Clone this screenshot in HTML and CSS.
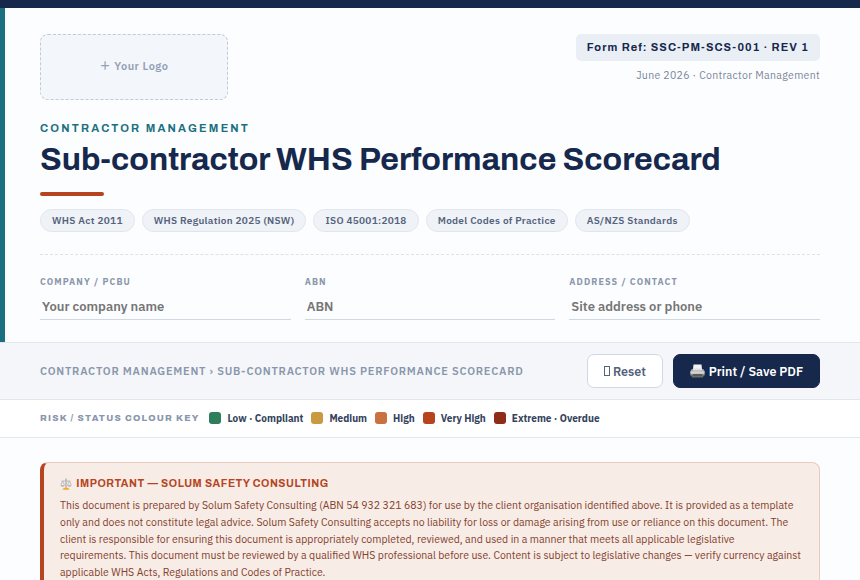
FILE: index.html
```
<!DOCTYPE html>
<html lang="en">
<head>
<meta charset="utf-8">
<title>Sub-contractor WHS Performance Scorecard</title>
<link rel="stylesheet" href="styles.css">
</head>
<body>
<div class="topbar"></div>
<header class="header">
  <div class="header-top">
    <div class="logo">＋ Your Logo</div>
    <div class="meta">
      <div class="ref">Form Ref: SSC-PM-SCS-001 · REV 1</div>
      <div class="date">June 2026 · Contractor Management</div>
    </div>
  </div>
  <div class="eyebrow">CONTRACTOR MANAGEMENT</div>
  <h1 class="title">Sub-contractor WHS Performance Scorecard</h1>
  <div class="rule"></div>
  <div class="chips">
    <span class="chip">WHS Act 2011</span>
    <span class="chip">WHS Regulation 2025 (NSW)</span>
    <span class="chip">ISO 45001:2018</span>
    <span class="chip">Model Codes of Practice</span>
    <span class="chip">AS/NZS Standards</span>
  </div>
  <div class="fields">
    <label class="field"><span class="field-label">COMPANY / PCBU</span><input class="field-input" placeholder="Your company name"></label>
    <label class="field"><span class="field-label">ABN</span><input class="field-input" placeholder="ABN"></label>
    <label class="field"><span class="field-label">ADDRESS / CONTACT</span><input class="field-input" placeholder="Site address or phone"></label>
  </div>
</header>
<div class="toolbar">
  <div class="crumb">CONTRACTOR MANAGEMENT › SUB-CONTRACTOR WHS PERFORMANCE SCORECARD</div>
  <div class="actions">
    <button class="btn"><span class="missing"></span>Reset</button>
    <button class="btn btn-primary"><svg class="printer" viewBox="0 0 15 14"><path d="M3.5 0.5h8l.6 6H2.9z" fill="#f4f4f4"/><path d="M1.8 5h11.4l1.3 2v4.5H.5V7z" fill="#a9a9a9"/><path d="M3 4.5h9v2H3z" fill="#dedede"/><path d="M.5 7.3h14v2.4H.5z" fill="#d2d2d2"/><path d="M1 10.5h13l-1 3H2z" fill="#6c6c68"/><path d="M3 10.3h9v1.2H3z" fill="#444"/></svg>Print / Save PDF</button>
  </div>
</div>
<div class="legend">
  <span class="legend-label">RISK / STATUS COLOUR KEY</span>
  <span class="key"><i class="swatch low"></i>Low · Compliant</span>
  <span class="key"><i class="swatch medium"></i>Medium</span>
  <span class="key"><i class="swatch high"></i>High</span>
  <span class="key"><i class="swatch very-high"></i>Very High</span>
  <span class="key"><i class="swatch extreme"></i>Extreme · Overdue</span>
</div>
<main class="main">
  <section class="notice">
    <div class="notice-title"><svg class="scales" viewBox="0 0 12 12"><g fill="none" stroke="#aeb0b3" stroke-width=".8"><path d="M1.5 3h9M2.6 3 .8 7M2.6 3l1.8 4M9.4 3 7.6 7M9.4 3l1.8 4"/><path d="M6 .6v9" stroke-width="1.4"/></g><path d="M.4 7h4.4Q4.4 9 2.6 9T.4 7zM7.2 7h4.4Q11.2 9 9.4 9T7.2 7z" fill="#b9bbbe"/><path d="M2.500 11.800Q2.800 9.800 6 9.300 9.200 9.800 9.500 11.800z" fill="#f3a92c"/></svg>IMPORTANT — SOLUM SAFETY CONSULTING</div>
    <p class="notice-text">This document is prepared by Solum Safety Consulting (ABN 54 932 321 683) for use by the client organisation identified above. It is provided as a template only and does not constitute legal advice. Solum Safety Consulting accepts no liability for loss or damage arising from use or reliance on this document. The client is responsible for ensuring this document is appropriately completed, reviewed, and used in a manner that meets all applicable legislative requirements. This document must be reviewed by a qualified WHS professional before use. Content is subject to legislative changes — verify currency against applicable WHS Acts, Regulations and Codes of Practice.</p>
  </section>
</main>
</body>
</html>
```
FILE: styles.css
```
* { box-sizing: border-box; }
body {
  margin: 0;
  height: 580px;
  overflow: hidden;
  background: #fcfdff;
  color: #16284c;
  font-family: "IBM Plex Sans", "Noto Sans", sans-serif;
}
.topbar { height: 8px; background: #16284c; }
.header {
  height: 334px;
  padding: 26px 40px 0 35px;
  border-left: 5px solid #1a7080;
}
.header-top { display: flex; justify-content: space-between; align-items: flex-start; }
.logo {
  width: 188px;
  height: 66px;
  padding-bottom: 1px;
  border: 1px dashed #c0cad8;
  border-radius: 8px;
  background: #f3f6fb;
  color: #94a0b4;
  font: 600 11px/63px "IBM Plex Sans", "Noto Sans CJK SC", sans-serif;
  letter-spacing: .5px;
  text-align: center;
}
.meta { display: flex; flex-direction: column; align-items: flex-end; }
.ref {
  height: 27px;
  padding: 0 11px;
  border-radius: 5px;
  background: #eaeff6;
  font: 700 11px/27px Archivo, sans-serif;
  letter-spacing: 1.1px;
}
.date { margin-top: 6px; font-size: 10.5px; line-height: 17px; letter-spacing: .32px; color: #7a869c; }
.eyebrow { margin-top: 21px; font: 700 11px/14px Archivo, sans-serif; letter-spacing: 2.2px; color: #1a7080; }
.title { margin: 7px 0 0; font: 700 32px/35px Archivo, sans-serif; letter-spacing: -.02px; white-space: nowrap; }
.rule { width: 64px; height: 4px; margin-top: 15px; border-radius: 2px; background: #b5441f; }
.chips { display: flex; gap: 7px; margin-top: 13px; }
.chip {
  height: 23px;
  padding: 0 11px;
  border: 1px solid #e1e6ee;
  border-radius: 12px;
  background: #eff2f7;
  color: #54627c;
  font-size: 10px;
  font-weight: 600;
  line-height: 21px;
  letter-spacing: .3px;
  white-space: nowrap;
}
.fields {
  display: grid;
  grid-template-columns: repeat(3, 1fr);
  gap: 14px;
  margin-top: 22px;
  padding-top: 20px;
  border-top: 1px dashed #dce2ec;
}
.field { display: flex; flex-direction: column; }
.field-label { font-size: 9px; font-weight: 700; line-height: 14px; letter-spacing: 1.08px; color: #8a96ab; }
.field-input {
  width: 100%;
  height: 26px;
  margin-top: 5px;
  padding: 0 2px;
  border: 0;
  border-bottom: 1px solid #d0d8e4;
  background: transparent;
  font: 600 13px "IBM Plex Sans", sans-serif;
}
.toolbar {
  height: 58px;
  padding: 0 40px;
  display: flex;
  align-items: center;
  justify-content: space-between;
  border-top: 1px solid #e2e7ee;
  border-bottom: 1px solid #e2e7ee;
  background: #f4f6fa;
}
.crumb { font-size: 11px; font-weight: 600; letter-spacing: .77px; color: #8a96ab; }
.actions { display: flex; gap: 10px; }
.btn {
  display: flex;
  align-items: center;
  justify-content: center;
  height: 34px;
  width: 76px;
  padding: 0;
  border: 1px solid #d0d8e4;
  border-radius: 7px;
  background: #fff;
  color: #54627c;
  font: 600 12.5px "IBM Plex Sans", sans-serif;
  white-space: nowrap;
}
.btn-primary { width: 147px; border-color: #16284c; background: #16284c; color: #fff; }
.missing { width: 6px; height: 10px; margin: 0 3px 1px 0; border: 1px solid #54627c; }
.printer { width: 15px; height: 14px; margin-right: 4px; }
.legend {
  height: 38px;
  padding: 0 40px 1px;
  display: flex;
  align-items: center;
  gap: 8px;
  border-bottom: 1px solid #e2e7ee;
  background: #fff;
}
.legend-label { margin-right: 1.8px; font: 800 9px Archivo, sans-serif; letter-spacing: 1.26px; color: #8a96ab; }
.key { display: flex; align-items: center; gap: 6px; font-size: 10px; font-weight: 700; color: #34425c; }
.swatch { width: 12px; height: 12px; border-radius: 3px; }
.low { background: #2e7d5b; }
.medium { background: #c99a3f; }
.high { background: #c8723f; }
.very-high { background: #b5441f; }
.extreme { background: #8e2d17; }
.main { padding: 24px 40px 0; }
.notice {
  height: 140px;
  padding: 13px 16px;
  border: 1px solid #ecc9bb;
  border-left: 4px solid #b5441f;
  border-radius: 8px;
  background: #f8ece6;
}
.notice-title {
  display: flex;
  align-items: center;
  font: 700 10.5px/16px Archivo, sans-serif;
  letter-spacing: .57px;
  color: #b5441f;
}
.scales { width: 12px; height: 12px; margin-right: 4.3px; }
.notice-text { margin: 5px 0 0; font-size: 10.5px; line-height: 16.8px; color: #82402c; }
```
